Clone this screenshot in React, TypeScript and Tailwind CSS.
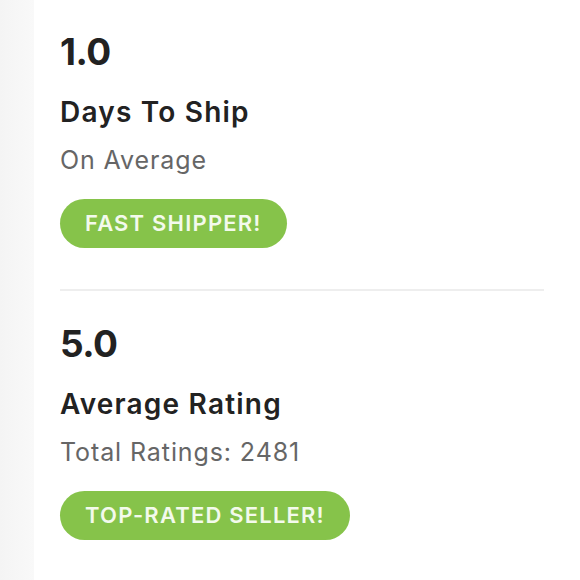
import React from "react";

function Stat({ value, title, sub, badge }: { value: string; title: string; sub: string; badge: string }) {
  return (
    <div className="flex flex-col items-start">
      <div className="text-[37px] leading-[38px] font-bold tracking-[-0.5px] text-[#222222]">{value}</div>
      <div className="mt-[27px] text-[28px] leading-[28px] font-semibold tracking-[1.2px] text-[#222222]">{title}</div>
      <div className="mt-[22px] text-[25px] leading-[25px] tracking-[0.9px] text-[#666666]">{sub}</div>
      <div className="mt-[26px] h-[49px] px-[25px] rounded-full bg-[#86c34a] flex items-center text-[22px] font-semibold tracking-[1.2px] text-[#f3faec]">
        {badge}
      </div>
    </div>
  );
}

export default function App() {
  return (
    <div className="w-[580px] h-[580px] flex bg-white overflow-hidden" style={{ fontFamily: "Inter, 'Noto Sans', sans-serif" }}>
      <div className="w-[34px] h-full bg-gradient-to-r from-[#f4f4f4] to-[#f9f9f9]" />
      <div className="flex-1 bg-white pl-[26px] pr-[36px] pt-[33px]">
        <Stat value="1.0" title="Days To Ship" sub="On Average" badge="FAST SHIPPER!" />
        <div className="mt-[41px] h-[2px] bg-[#eeeeee]" />
        <div className="pt-[34px]">
          <Stat value="5.0" title="Average Rating" sub="Total Ratings: 2481" badge="TOP-RATED SELLER!" />
        </div>
      </div>
    </div>
  );
}
